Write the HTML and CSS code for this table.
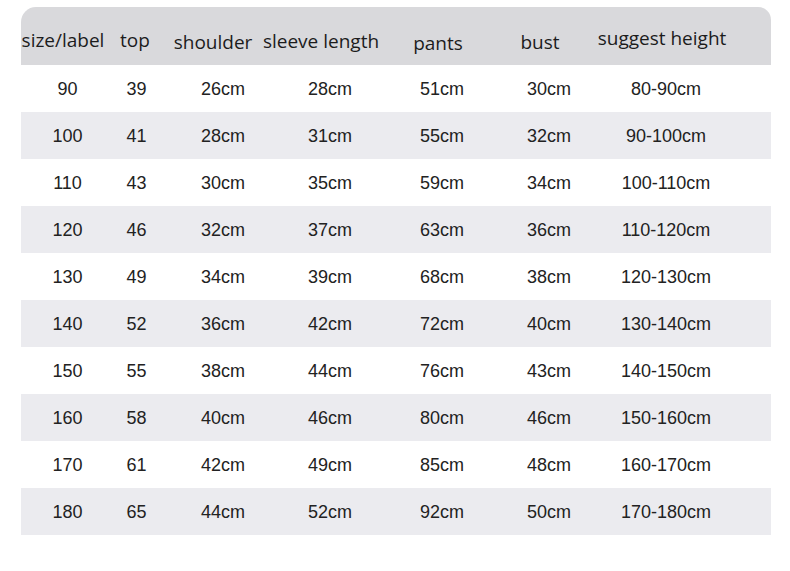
FILE: index.html
```html
<!DOCTYPE html>
<html>
<head>
<meta charset="utf-8">
<link rel="stylesheet" href="styles.css">
</head>
<body>
<div class="chart">
  <div class="head">
    <div class="h">size/label</div>
    <div class="h">top</div>
    <div class="h">shoulder</div>
    <div class="h">sleeve length</div>
    <div class="h">pants</div>
    <div class="h">bust</div>
    <div class="h">suggest height</div>
  </div>
  <div class="row"><span>90</span><span>39</span><span>26cm</span><span>28cm</span><span>51cm</span><span>30cm</span><span>80-90cm</span></div>
  <div class="row"><span>100</span><span>41</span><span>28cm</span><span>31cm</span><span>55cm</span><span>32cm</span><span>90-100cm</span></div>
  <div class="row"><span>110</span><span>43</span><span>30cm</span><span>35cm</span><span>59cm</span><span>34cm</span><span>100-110cm</span></div>
  <div class="row"><span>120</span><span>46</span><span>32cm</span><span>37cm</span><span>63cm</span><span>36cm</span><span>110-120cm</span></div>
  <div class="row"><span>130</span><span>49</span><span>34cm</span><span>39cm</span><span>68cm</span><span>38cm</span><span>120-130cm</span></div>
  <div class="row"><span>140</span><span>52</span><span>36cm</span><span>42cm</span><span>72cm</span><span>40cm</span><span>130-140cm</span></div>
  <div class="row"><span>150</span><span>55</span><span>38cm</span><span>44cm</span><span>76cm</span><span>43cm</span><span>140-150cm</span></div>
  <div class="row"><span>160</span><span>58</span><span>40cm</span><span>46cm</span><span>80cm</span><span>46cm</span><span>150-160cm</span></div>
  <div class="row"><span>170</span><span>61</span><span>42cm</span><span>49cm</span><span>85cm</span><span>48cm</span><span>160-170cm</span></div>
  <div class="row"><span>180</span><span>65</span><span>44cm</span><span>52cm</span><span>92cm</span><span>50cm</span><span>170-180cm</span></div>
</div>
</body>
</html>
```
FILE: styles.css
```css
html, body {
  margin: 0;
  padding: 0;
  background: #ffffff;
}
.chart {
  width: 750px;
  margin: 7px 0 0 21px;
}
.head {
  height: 58px;
  background: #d9d9dc;
  border-radius: 15px 13px 0 0;
  display: grid;
  grid-template-columns: 84px 60px 96px 120px 114px 90px 154px 1fr;
  font-family: "Open Sans", "Noto Sans", sans-serif;
  font-size: 19px;
  color: #1c1c1c;
}
.h {
  text-align: center;
  white-space: nowrap;
  padding-top: 20px;
  line-height: 26px;
}
.h:nth-child(3) { padding-top: 22px; }
.h:nth-child(4) { padding-top: 20.5px; }
.h:nth-child(5) { padding-top: 23px; }
.h:nth-child(6) { padding-top: 21.5px; }
.h:nth-child(7) { padding-top: 18px; }
.row {
  height: 47px;
  box-sizing: border-box;
  padding-top: 2px;
  display: grid;
  grid-template-columns: 93px 45px 128px 86px 138px 76px 158px 1fr;
  align-items: center;
  font-family: "Liberation Sans", Arial, sans-serif;
  font-size: 18px;
  color: #222222;
}
.row:nth-of-type(odd) {
  background: #ebebef;
}
.row span {
  text-align: center;
  white-space: nowrap;
}
```
